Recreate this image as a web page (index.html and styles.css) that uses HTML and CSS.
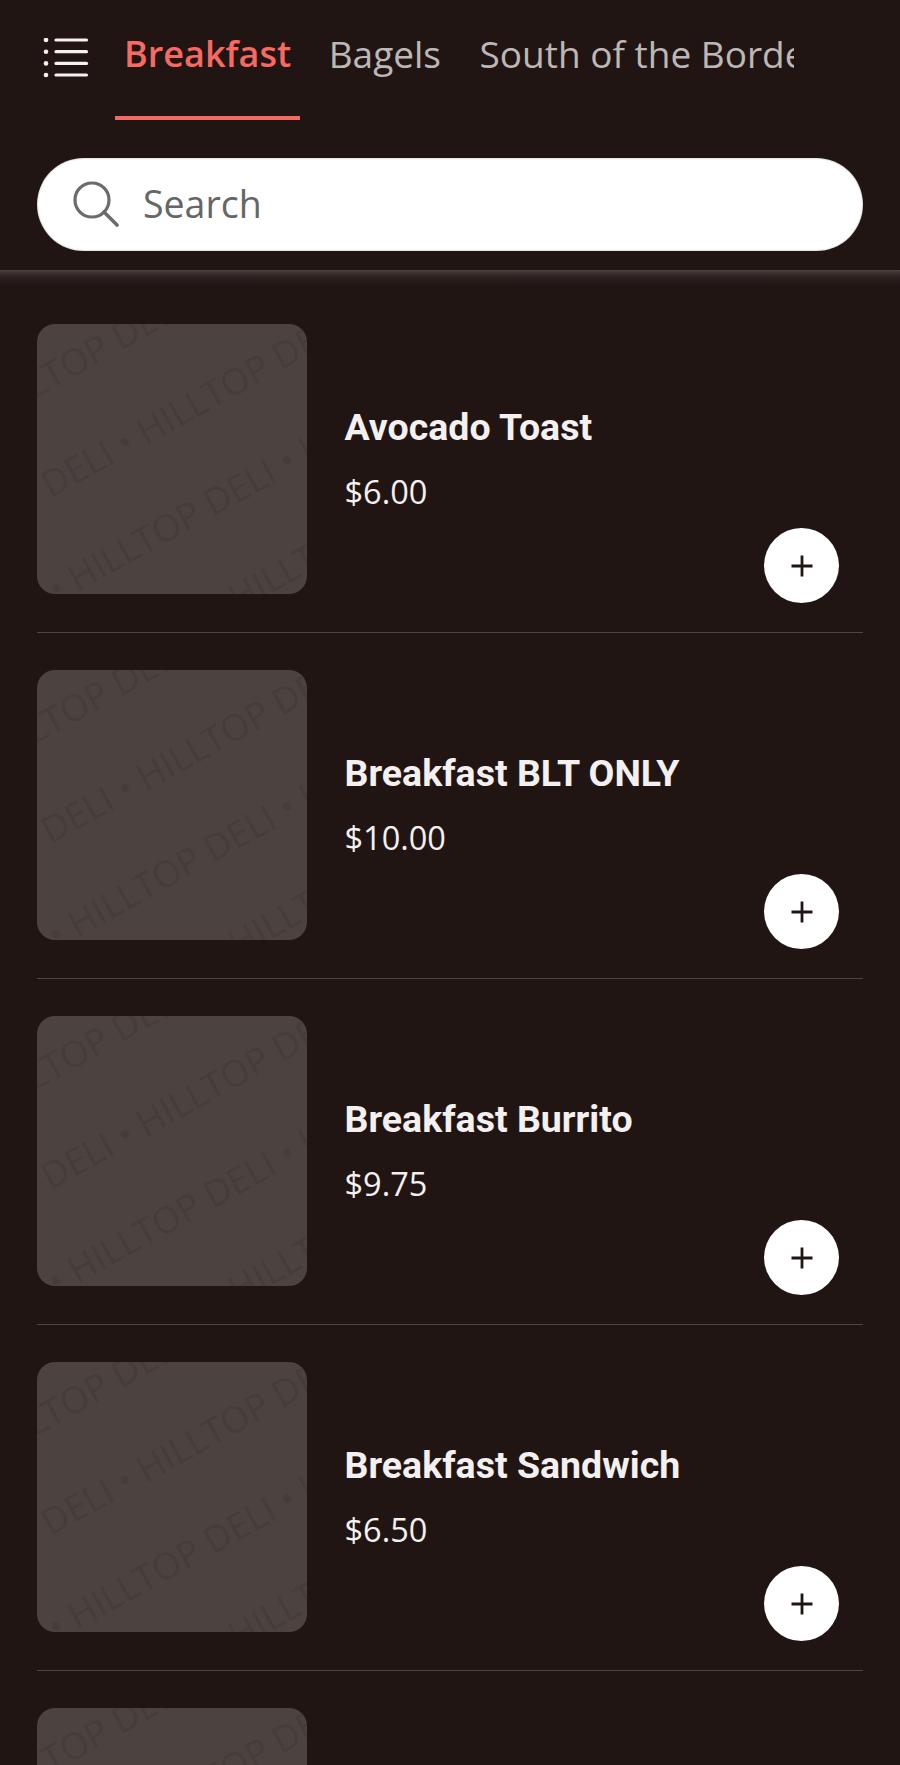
FILE: index.html
```html
<!DOCTYPE html>
<html lang="en">
<head>
    <meta charset="UTF-8">
    <meta name="viewport" content="width=device-width, initial-scale=1.0">
    <title>Hilltop Deli - Menu</title>
    <link rel="stylesheet" href="styles.css">
</head>
<body>
    <header class="top">
        <nav class="tabs">
            <button class="menuBtn" aria-label="Categories">
                <svg width="46" height="40" viewBox="0 0 46 40">
                    <g fill="#f5f1f0">
                        <circle cx="3" cy="2" r="2.3"/>
                        <circle cx="3" cy="13.7" r="2.3"/>
                        <circle cx="3" cy="25.4" r="2.3"/>
                        <circle cx="3" cy="37" r="2.3"/>
                    </g>
                    <g stroke="#f5f1f0" stroke-width="3.2" stroke-linecap="round">
                        <path d="M13 2H43.5"/>
                        <path d="M13 13.7H43.5"/>
                        <path d="M13 25.4H43.5"/>
                        <path d="M13 37H43.5"/>
                    </g>
                </svg>
            </button>
            <div class="tabList">
                <a class="tab active">Breakfast</a>
                <a class="tab">Bagels</a>
                <a class="tab">South of the Border</a>
            </div>
        </nav>
        <div class="search">
            <svg width="46" height="46" viewBox="0 0 46 46">
                <circle cx="19" cy="19" r="17" fill="none" stroke="#6b6b6b" stroke-width="3.2"/>
                <path d="M31 31L44 44" stroke="#6b6b6b" stroke-width="3.6" stroke-linecap="round"/>
            </svg>
            <span class="searchText">Search</span>
        </div>
    </header>

    <main class="list">
        <article class="item">
            <div class="thumb">
                <div class="mark">
                    <span>HILLTOP DELI • HILLTOP DELI • HILLTOP DELI</span>
                    <span class="shift">HILLTOP DELI • HILLTOP DELI • HILLTOP DELI</span>
                    <span>HILLTOP DELI • HILLTOP DELI • HILLTOP DELI</span>
                    <span class="shift">HILLTOP DELI • HILLTOP DELI • HILLTOP DELI</span>
                </div>
            </div>
            <div class="info">
                <h2>Avocado Toast</h2>
                <p>$6.00</p>
            </div>
            <button class="add" aria-label="Add">
                <svg width="24" height="24" viewBox="0 0 24 24"><path d="M12 1.5V22.5M1.5 12H22.5" stroke="#211514" stroke-width="2.8"/></svg>
            </button>
        </article>
        <article class="item">
            <div class="thumb">
                <div class="mark">
                    <span>HILLTOP DELI • HILLTOP DELI • HILLTOP DELI</span>
                    <span class="shift">HILLTOP DELI • HILLTOP DELI • HILLTOP DELI</span>
                    <span>HILLTOP DELI • HILLTOP DELI • HILLTOP DELI</span>
                    <span class="shift">HILLTOP DELI • HILLTOP DELI • HILLTOP DELI</span>
                </div>
            </div>
            <div class="info">
                <h2>Breakfast BLT ONLY</h2>
                <p>$10.00</p>
            </div>
            <button class="add" aria-label="Add">
                <svg width="24" height="24" viewBox="0 0 24 24"><path d="M12 1.5V22.5M1.5 12H22.5" stroke="#211514" stroke-width="2.8"/></svg>
            </button>
        </article>
        <article class="item">
            <div class="thumb">
                <div class="mark">
                    <span>HILLTOP DELI • HILLTOP DELI • HILLTOP DELI</span>
                    <span class="shift">HILLTOP DELI • HILLTOP DELI • HILLTOP DELI</span>
                    <span>HILLTOP DELI • HILLTOP DELI • HILLTOP DELI</span>
                    <span class="shift">HILLTOP DELI • HILLTOP DELI • HILLTOP DELI</span>
                </div>
            </div>
            <div class="info">
                <h2>Breakfast Burrito</h2>
                <p>$9.75</p>
            </div>
            <button class="add" aria-label="Add">
                <svg width="24" height="24" viewBox="0 0 24 24"><path d="M12 1.5V22.5M1.5 12H22.5" stroke="#211514" stroke-width="2.8"/></svg>
            </button>
        </article>
        <article class="item">
            <div class="thumb">
                <div class="mark">
                    <span>HILLTOP DELI • HILLTOP DELI • HILLTOP DELI</span>
                    <span class="shift">HILLTOP DELI • HILLTOP DELI • HILLTOP DELI</span>
                    <span>HILLTOP DELI • HILLTOP DELI • HILLTOP DELI</span>
                    <span class="shift">HILLTOP DELI • HILLTOP DELI • HILLTOP DELI</span>
                </div>
            </div>
            <div class="info">
                <h2>Breakfast Sandwich</h2>
                <p>$6.50</p>
            </div>
            <button class="add" aria-label="Add">
                <svg width="24" height="24" viewBox="0 0 24 24"><path d="M12 1.5V22.5M1.5 12H22.5" stroke="#211514" stroke-width="2.8"/></svg>
            </button>
        </article>
        <article class="item">
            <div class="thumb">
                <div class="mark">
                    <span>HILLTOP DELI • HILLTOP DELI • HILLTOP DELI</span>
                    <span class="shift">HILLTOP DELI • HILLTOP DELI • HILLTOP DELI</span>
                    <span>HILLTOP DELI • HILLTOP DELI • HILLTOP DELI</span>
                    <span class="shift">HILLTOP DELI • HILLTOP DELI • HILLTOP DELI</span>
                </div>
            </div>
        </article>
    </main>
</body>
</html>
```

FILE: styles.css
```css
html, body{
    margin: 0px;
    height: 100%;
    overflow: hidden;
}
body{
    background-color: #211514;
    font-family: "Open Sans", sans-serif;
    color: #f3f0ef;
}
button{
    border: none;
    padding: 0;
    background: none;
}

/* header */
.top{
    height: 270px;
    padding: 0 37.5px 0 37px;
    box-sizing: border-box;
}
.tabs{
    display: flex;
    height: 120px;
}
.menuBtn{
    width: 78px;
    flex: none;
    padding: 38px 0 0 6px;
    text-align: left;
    align-self: flex-start;
}
.menuBtn svg{
    display: block;
}
.tabList{
    width: 679px;
    display: flex;
    gap: 19.5px;
    overflow: hidden;
}
.tab{
    flex: none;
    height: 120px;
    box-sizing: border-box;
    padding: 28px 9.5px 0;
    font-size: 37px;
    line-height: 52px;
    color: #bdb8b6;
    white-space: nowrap;
}
.tab.active{
    padding: 28px 8.5px 0 9px;
    font-size: 36px;
    color: #f76a62;
    font-weight: 600;
    border-bottom: 4px solid #f76a62;
}
.search{
    margin-top: 37.5px;
    height: 93px;
    border-radius: 47px;
    background-color: #ffffff;
    display: flex;
    align-items: center;
    padding-left: 35.5px;
    gap: 24.5px;
    box-shadow: inset 0 0 2px rgba(0,0,0,0.4);
}
.searchText{
    font-size: 37.5px;
    line-height: 50px;
    color: #666666;
}
.list{
    background: linear-gradient(#4a4544, #3a2f2e 3px, #2a1e1d 9px, #211514 16px) no-repeat top / 100% 16px;
    padding: 0 37.5px 0 37px;
}

/* menu items */
.item{
    display: grid;
    grid-template-columns: 270px 1fr;
    column-gap: 37.5px;
    padding: 37px 0 38px;
    border-bottom: 1px solid #4d4544;
}
.item:first-child{
    padding-top: 54px;
}
.thumb{
    width: 270px;
    height: 270px;
    border-radius: 18px;
    background-color: #4c4341;
    overflow: hidden;
    position: relative;
    grid-row: 1;
    grid-column: 1;
}
/* watermark is a brick pattern of tilted lines */
.mark{
    position: absolute;
    left: 0;
    top: 0;
    transform-origin: 0 0;
    transform: rotate(-29deg) translate(-359px, 3px);
    font-size: 36.5px;
    line-height: 95px;
    color: #463c3a;
    white-space: nowrap;
}
.mark span{
    display: block;
}
.mark .shift{
    margin-left: 131px;
}
.info{
    grid-row: 1;
    grid-column: 2;
    align-self: center;
    padding-top: 1px;
}
.info h2{
    margin: 0;
    font-family: Roboto, sans-serif;
    font-size: 37.5px;
    line-height: 42px;
    font-weight: 700;
    color: #f3f0ef;
}
.info p{
    margin: 23px 0 0;
    font-size: 32.5px;
    line-height: 42px;
    color: #f3f0ef;
}
.add{
    grid-row: 1;
    grid-column: 2;
    align-self: end;
    justify-self: end;
    width: 75px;
    height: 75px;
    margin: 0 23.5px -9px 0;
    border-radius: 50%;
    background-color: #ffffff;
    display: flex;
    align-items: center;
    justify-content: center;
}
```
